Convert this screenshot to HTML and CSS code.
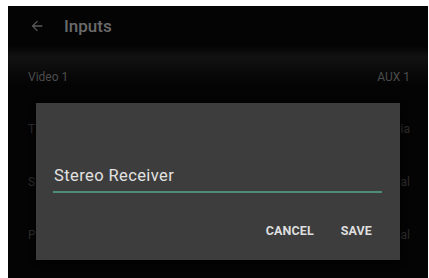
FILE: index.html
```html
<!DOCTYPE html>
<html>
<head>
<meta charset="utf-8">
<link rel="stylesheet" href="styles.css">
</head>
<body>
<div class="screen">
  <div class="appbar">
    <svg class="back" width="16" height="16" viewBox="0 0 24 24"><path d="M20 11H7.8l5.6-5.6L12 4l-8 8 8 8 1.4-1.4L7.8 13H20z" fill="#5a5a5a"/></svg>
    <span class="title">Inputs</span>
  </div>
  <div class="list">
    <div class="row first"><span>Video 1</span><span>AUX 1</span></div>
    <div class="row"><span class="dim">TV</span><span class="dim">ia</span></div>
    <div class="row"><span class="dim">S</span><span class="dim">al</span></div>
    <div class="row"><span class="dim">P</span><span class="dim">al</span></div>
  </div>
  <div class="dialog">
    <div class="field">
      <div class="value">Stereo Receiver</div>
      <div class="line"></div>
    </div>
    <div class="actions">
      <span class="btn">CANCEL</span>
      <span class="btn">SAVE</span>
    </div>
  </div>
</div>
</body>
</html>
```
FILE: styles.css
```css
html, body { margin: 0; padding: 0; background: #ffffff; }
body { font-family: Roboto, "Noto Sans", sans-serif; }
.screen {
  margin: 6px 0 0 8px;
  width: 420px;
  height: 272px;
  background: #040404;
  position: relative;
  overflow: hidden;
}
.appbar {
  height: 40px;
  display: flex;
  align-items: center;
  padding-left: 21px;
  gap: 19px;
}
.back { display: block; }
.title { color: #6a6a6a; font-size: 17px; font-weight: 500; }
.list { padding: 0 18px 0 20px; }
.row {
  height: 53px;
  display: flex;
  justify-content: space-between;
  align-items: center;
  color: #2a2a2a;
  font-size: 12px;
}
.row.first {
  height: 56px;
  color: #4c4c4c;
  background: linear-gradient(#040404 0%, #121212 20%, #0a0a0a 45%, #040404 70%);
  margin: 0 -18px 0 -20px;
  padding: 6px 18px 0 20px;
  box-sizing: border-box;
}
.dim { color: #2c2c2c; }
.dialog {
  position: absolute;
  left: 28px;
  top: 97px;
  width: 364px;
  height: 157px;
  background: #3d3d3d;
  box-shadow: 0 2px 6px rgba(0,0,0,0.8);
  display: flex;
  flex-direction: column;
  box-sizing: border-box;
  padding: 63px 18px 0 17px;
}
.value { color: #e2e2e2; font-size: 16.5px; letter-spacing: 0.4px; line-height: 20px; padding-left: 1px; }
.line { height: 2px; background: #4f8c7c; margin-top: 5px; }
.actions {
  display: flex;
  justify-content: flex-end;
  gap: 27px;
  padding-right: 10px;
  margin-top: 30px;
}
.btn { color: #dedede; font-size: 12.5px; font-weight: 700; letter-spacing: 0.1px; }
```
